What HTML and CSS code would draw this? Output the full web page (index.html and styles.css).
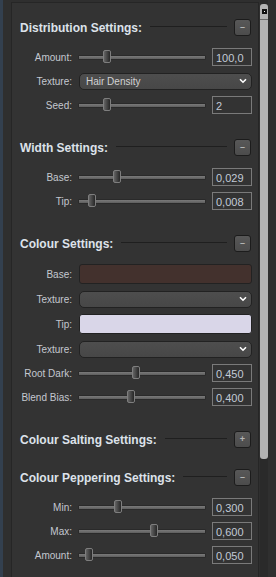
FILE: index.html
```html
<!DOCTYPE html>
<html lang="en">
<head>
  <meta charset="UTF-8">
  <title>Hair Settings</title>
  <link rel="stylesheet" href="styles.css">
</head>
<body>
  <div class="edge"></div>

  <div class="panel">

    <div class="section">
      <div class="heading">
        <span class="title">Distribution Settings:</span>
        <span class="rule"></span>
        <span class="toggle">&ndash;</span>
      </div>
      <div class="rows">
        <div class="row">
          <span class="label">Amount:</span>
          <div class="slider"><div class="track"></div><div class="thumb" style="left:25px"></div></div>
          <input class="num" type="text" value="100,0">
        </div>
        <div class="row">
          <span class="label">Texture:</span>
          <div class="select"><span>Hair Density</span><svg width="8" height="6" viewBox="0 0 8 6"><path d="M1 1.2l3 3 3-3" fill="none" stroke="#fff" stroke-width="1.6"/></svg></div>
        </div>
        <div class="row">
          <span class="label">Seed:</span>
          <div class="slider"><div class="track"></div><div class="thumb" style="left:25px"></div></div>
          <input class="num" type="text" value="2">
        </div>
      </div>
    </div>

    <div class="section">
      <div class="heading">
        <span class="title">Width Settings:</span>
        <span class="rule"></span>
        <span class="toggle">&ndash;</span>
      </div>
      <div class="rows">
        <div class="row">
          <span class="label">Base:</span>
          <div class="slider"><div class="track"></div><div class="thumb" style="left:35px"></div></div>
          <input class="num" type="text" value="0,029">
        </div>
        <div class="row">
          <span class="label">Tip:</span>
          <div class="slider"><div class="track"></div><div class="thumb" style="left:10px"></div></div>
          <input class="num" type="text" value="0,008">
        </div>
      </div>
    </div>

    <div class="section">
      <div class="heading">
        <span class="title">Colour Settings:</span>
        <span class="rule"></span>
        <span class="toggle">&ndash;</span>
      </div>
      <div class="rows">
        <div class="row tall">
          <span class="label">Base:</span>
          <div class="swatch" style="background:#43312d"></div>
        </div>
        <div class="row">
          <span class="label">Texture:</span>
          <div class="select"><span></span><svg width="8" height="6" viewBox="0 0 8 6"><path d="M1 1.2l3 3 3-3" fill="none" stroke="#fff" stroke-width="1.6"/></svg></div>
        </div>
        <div class="row tall">
          <span class="label">Tip:</span>
          <div class="swatch" style="background:#d9d6e8"></div>
        </div>
        <div class="row">
          <span class="label">Texture:</span>
          <div class="select"><span></span><svg width="8" height="6" viewBox="0 0 8 6"><path d="M1 1.2l3 3 3-3" fill="none" stroke="#fff" stroke-width="1.6"/></svg></div>
        </div>
        <div class="row">
          <span class="label">Root Dark:</span>
          <div class="slider"><div class="track"></div><div class="thumb" style="left:54px"></div></div>
          <input class="num" type="text" value="0,450">
        </div>
        <div class="row">
          <span class="label">Blend Bias:</span>
          <div class="slider"><div class="track"></div><div class="thumb" style="left:49px"></div></div>
          <input class="num" type="text" value="0,400">
        </div>
      </div>
    </div>

    <div class="section collapsed">
      <div class="heading">
        <span class="title">Colour Salting Settings:</span>
        <span class="rule"></span>
        <span class="toggle">+</span>
      </div>
    </div>

    <div class="section">
      <div class="heading">
        <span class="title">Colour Peppering Settings:</span>
        <span class="rule"></span>
        <span class="toggle">&ndash;</span>
      </div>
      <div class="rows">
        <div class="row">
          <span class="label">Min:</span>
          <div class="slider"><div class="track"></div><div class="thumb" style="left:36px"></div></div>
          <input class="num" type="text" value="0,300">
        </div>
        <div class="row">
          <span class="label">Max:</span>
          <div class="slider"><div class="track"></div><div class="thumb" style="left:72px"></div></div>
          <input class="num" type="text" value="0,600">
        </div>
        <div class="row">
          <span class="label">Amount:</span>
          <div class="slider"><div class="track"></div><div class="thumb" style="left:7px"></div></div>
          <input class="num" type="text" value="0,050">
        </div>
      </div>
    </div>

  </div>

  <div class="scrollbar">
    <div class="scroll-thumb">
      <div class="scroll-btn"><span class="dot"></span></div>
    </div>
  </div>
</body>
</html>
```

FILE: styles.css
```css
body {
  margin: 0;
  height: 577px;
  overflow: hidden;
  background-color: #2f2f2f;
  font-family: "Liberation Sans", Arial, sans-serif;
  display: flex;
}

.edge {
  width: 3px;
  background: #33404f;
  margin-right: 8px;
}

.panel {
  width: 248px;
  margin-top: 2px;
  background: #333333;
  border-left: 1px solid #262626;
  border-right: 1px solid #262626;
  border-top: 1px solid #262626;
  padding: 16px 8px 0 8px;
  box-sizing: border-box;
  display: flex;
  flex-direction: column;
}

.section + .section {
  margin-top: 25px;
}

.section.collapsed + .section {
  margin-top: 21px;
}

.heading {
  display: flex;
  align-items: center;
  height: 17px;
}

.title {
  font-size: 12px;
  font-weight: bold;
  color: #dde2ea;
  white-space: nowrap;
  padding-top: 1px;
}

.rule {
  flex: 1;
  height: 1px;
  background: #1f1f1f;
  margin: 0 7px 3px 8px;
}

.toggle {
  width: 15px;
  height: 15px;
  margin-right: -1px;
  border: 1px solid #1c1c1c;
  border-radius: 3px;
  background: linear-gradient(#585858, #4c4c4c);
  color: #b4b4b4;
  font-size: 9px;
  font-weight: bold;
  line-height: 15px;
  text-align: center;
}

.rows {
  margin-top: 12px;
  display: flex;
  flex-direction: column;
  gap: 6px;
}

.row {
  display: grid;
  grid-template-columns: 52px 128px 40px;
  column-gap: 6px;
  align-items: center;
  height: 18px;
}

.row.tall {
  height: 20px;
}

.label {
  font-size: 10px;
  color: #c4c8d0;
  text-align: right;
  white-space: nowrap;
}

.slider {
  position: relative;
  height: 18px;
}

.track {
  position: absolute;
  left: 0;
  right: 0;
  top: 7px;
  height: 3px;
  background: linear-gradient(#7a7a7a, #5e5e5e);
  border: 1px solid #2a2a2a;
  border-radius: 1px;
}

.thumb {
  position: absolute;
  top: 2px;
  width: 6px;
  height: 11px;
  border: 1px solid #7e7e7e;
  border-radius: 2px;
  background: linear-gradient(90deg, #646464, #262626);
}

.num {
  width: 40px;
  height: 18px;
  box-sizing: border-box;
  margin: 0;
  padding: 1px 0 0 3px;
  background: transparent;
  border: 1px solid #7a7a7a;
  border-radius: 0;
  color: #c2cad6;
  font-family: "Liberation Sans", Arial, sans-serif;
  font-size: 11px;
}

.select {
  grid-column: 2 / 4;
  height: 17px;
  margin-left: 1px;
  box-sizing: border-box;
  border: 1px solid #222;
  border-radius: 5px;
  background: linear-gradient(#4e4e4e, #474747);
  display: flex;
  align-items: center;
  justify-content: space-between;
  padding: 0 4px 0 6px;
  color: #d2d2d2;
  font-size: 10px;
}

.swatch {
  grid-column: 2 / 4;
  height: 20px;
  margin-left: 1px;
  box-sizing: border-box;
  border: 1px solid #222;
  border-radius: 3px;
}

.scrollbar {
  width: 8px;
  margin-left: 1px;
  background: #2a2a2a;
}

.scroll-thumb {
  margin-top: 4px;
  height: 455px;
  background: #b3b3b3;
  border-radius: 3px;
}

.scroll-btn {
  height: 15px;
  border-bottom: 1px solid #6a6a6a;
  display: flex;
  align-items: center;
  justify-content: center;
}

.dot {
  width: 1px;
  height: 1px;
  border: 2px solid #111;
  background: #fff;
}
```
